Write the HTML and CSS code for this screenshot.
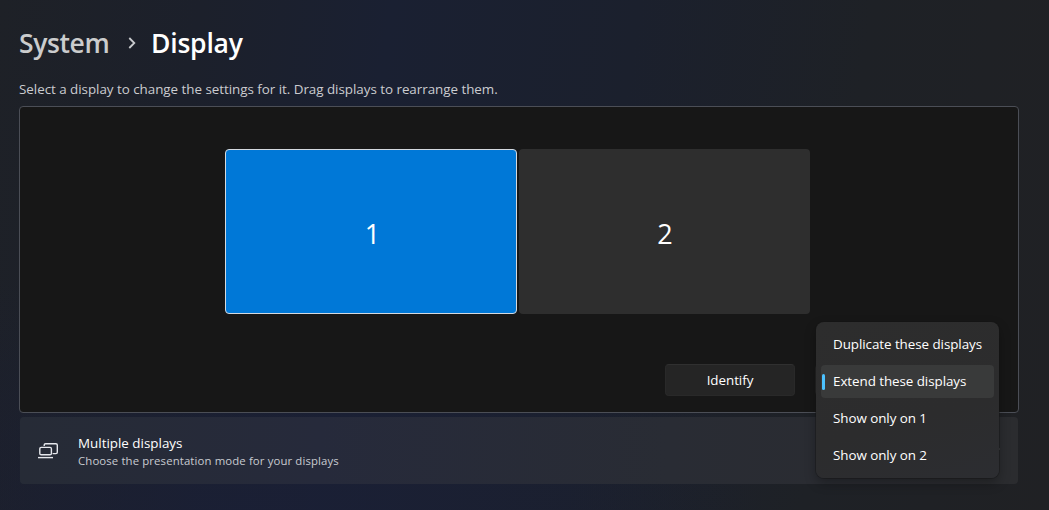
FILE: index.html
```
<!DOCTYPE html>
<html lang="en">
<head>
<meta charset="utf-8">
<title>System - Display</title>
<link rel="stylesheet" href="styles.css">
</head>
<body>
<main class="page">
  <h1 class="breadcrumb">
    <span class="crumb-parent">System</span>
    <svg class="chevron" width="8" height="12" viewBox="0 0 8 12"><path d="M1.3 1 6.3 6 1.3 11"/></svg>
    <span class="crumb-current">Display</span>
  </h1>
  <p class="hint">Select a display to change the settings for it. Drag displays to rearrange them.</p>
  <section class="arrangement">
    <div class="monitors">
      <div class="monitor selected"><span>1</span></div>
      <div class="monitor"><span>2</span></div>
    </div>
    <div class="actions">
      <button class="identify"><span>Identify</span></button>
      <div class="mode">
        <ul class="menu">
          <li><span>Duplicate these displays</span></li>
          <li class="active"><span>Extend these displays</span></li>
          <li><span>Show only on 1</span></li>
          <li><span>Show only on 2</span></li>
        </ul>
      </div>
    </div>
  </section>
  <section class="card">
    <svg class="displays-icon" width="22" height="18" viewBox="0 0 22 18">
      <path d="M6.2 4V3Q6.2 1.7 7.5 1.7H17.9Q19.3 1.7 19.3 3.1V10.2Q19.3 11.6 17.9 11.6H14.6"/>
      <rect x="1.8" y="5.4" width="11.6" height="7.4" rx="1.4"/>
      <path d="M0 15.6H15"/>
    </svg>
    <div class="card-labels">
      <div class="card-title"><span>Multiple displays</span></div>
      <div class="card-text"><span>Choose the presentation mode for your displays</span></div>
    </div>
    <svg class="card-chevron" width="12" height="6" viewBox="0 0 12 6"><path d="M1 1 6 5 11.5 1"/></svg>
  </section>
</main>
</body>
</html>
```
FILE: styles.css
```
* { box-sizing: border-box; }
body {
  margin: 0;
  font: 13.4px/20px "Open Sans", "Noto Sans", sans-serif;
  color: #fff;
  background: linear-gradient(98deg, #1e2127 0%, #1c202b 18%, #1a2032 35%, #1b202d 57%, #1e2126 78%, #202124 100%);
}
.page {
  height: 510px;
  padding: 25px 30px 0 19px;
  overflow: hidden;
  background: radial-gradient(ellipse 520px 260px at 240px 510px, rgba(26, 31, 54, .75), rgba(26, 31, 54, 0));
}
.breadcrumb {
  display: flex;
  align-items: center;
  height: 36px;
  margin: 0;
  font-size: 26.5px;
  line-height: 36px;
  font-weight: 600;
}
.crumb-parent { width: 109px; color: #cbcccd; letter-spacing: -.4px; }
.crumb-current { margin-left: 15px; letter-spacing: -.2px; }
.chevron { fill: none; stroke: #c9cbce; stroke-width: 1.8; }
.hint { margin: 18px 0 7px; color: #cbccd0; letter-spacing: -.03px; }
.arrangement {
  height: 307px;
  padding: 42px 19px 16px 205px;
  border: 1px solid #4b4e56;
  border-radius: 4px;
  background: #171717;
}
.monitors { display: flex; gap: 2px; }
.monitor {
  display: flex;
  align-items: center;
  justify-content: center;
  width: 291px;
  height: 165px;
  padding: 5px 0 0 1px;
  border-radius: 4px;
  background: #2e2e2e;
  font-size: 27px;
}
.monitor.selected { width: 292px; padding-left: 3px; border: 1px solid #d4d9df; background: #0078d7; }
.actions { display: flex; margin: 50px 0 0 440px; }
.identify {
  flex: none;
  width: 130px;
  height: 32px;
  padding: 0;
  border: 1px solid #292929;
  border-top-color: #303030;
  border-radius: 4px;
  background: #252525;
  color: #fff;
  font: inherit;
}
.identify span { letter-spacing: -.05px; }
.mode { position: relative; flex: none; width: 184px; height: 32px; margin-left: 20px; border: 1px solid #292929; border-radius: 4px; }
.menu {
  position: absolute;
  z-index: 1;
  left: 0;
  top: -43px;
  width: 183px;
  height: 156px;
  margin: 0;
  padding: 6px 5px;
  list-style: none;
  border-radius: 8px;
  background: linear-gradient(165deg, #2d2d2d, #2c2c2d 60%, #2c2d31);
  box-shadow: 0 0 0 1px rgba(20, 20, 20, .4), 0 5px 12px rgba(0, 0, 0, .3);
}
.menu li { display: flex; align-items: center; height: 33px; margin-bottom: 4px; padding: 0 0 2px 12px; border-radius: 4px; white-space: nowrap; letter-spacing: -.06px; }
.menu .active { position: relative; background: #393a3a; }
.active::before { content: ""; position: absolute; left: 1px; top: 9px; width: 3px; height: 16px; border-radius: 2px; background: #4cc2ff; }
.card {
  display: flex;
  align-items: center;
  width: 998px;
  height: 67px;
  margin: 4px 0 0 1px;
  padding-left: 18px;
  border-radius: 4px;
  background: linear-gradient(90deg, #262b36, #262a3b 30%, #292c34 65%, #2b2c2f);
}
.displays-icon { margin-right: 18px; fill: none; stroke: #e5e7ec; stroke-width: 1.4; }
.card-labels { padding-top: 2px; }
.card-title { line-height: 19px; }
.card-text { font-size: 11.4px; line-height: 16px; color: #c8cad0; letter-spacing: .11px; }
.card-chevron { margin-left: auto; margin-right: 18px; fill: none; stroke: #aaa; }
```
